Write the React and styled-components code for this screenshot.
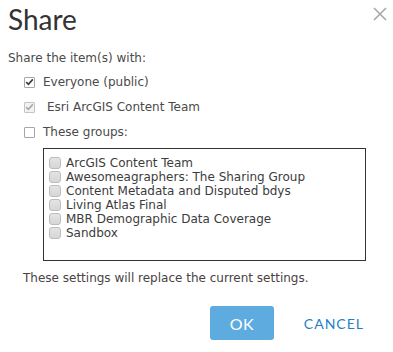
import { styled, createGlobalStyle } from "styled-components";

const groups = [
  "ArcGIS Content Team",
  "Awesomeagraphers: The Sharing Group",
  "Content Metadata and Disputed bdys",
  "Living Atlas Final",
  "MBR Demographic Data Coverage",
  "Sandbox",
];

const Tick = ({ color }) => (
  <svg width="9" height="8" viewBox="0 0 9 8">
    <path d="M1.2 4.2 L3.4 6.3 L7.8 1.4" fill="none" stroke={color} strokeWidth="1.6" />
  </svg>
);

const App = () => {
  return (
    <>
      <GlobalStyle />
      <Dialog>
        <Header>
          <Title>Share</Title>
          <Close aria-label="close">
            <svg width="14" height="14" viewBox="0 0 14 14">
              <path d="M1 1 L13 13 M13 1 L1 13" stroke="#a8a8a8" strokeWidth="1.6" />
            </svg>
          </Close>
        </Header>

        <Lead>Share the item(s) with:</Lead>

        <Options>
          <Option>
            <Box>
              <Tick color="#3c3c3c" />
            </Box>
            Everyone (public)
          </Option>
          <Option $dim>
            <Box $disabled>
              <Tick color="#a8a8a8" />
            </Box>
            Esri ArcGIS Content Team
          </Option>
          <Option>
            <Box />
            These groups:
          </Option>
        </Options>

        <GroupList>
          {groups.map((g) => (
            <GroupRow key={g}>
              <GroupBox />
              {g}
            </GroupRow>
          ))}
        </GroupList>

        <Note>These settings will replace the current settings.</Note>

        <Footer>
          <OkButton>OK</OkButton>
          <CancelButton>CANCEL</CancelButton>
        </Footer>
      </Dialog>
    </>
  );
};

export default App;

const GlobalStyle = createGlobalStyle`
  body {
    margin: 0;
    background: #ffffff;
    font-family: "DejaVu Sans", Verdana, sans-serif;
  }
`;

const Dialog = styled.div`
  width: 393px;
  height: 352px;
  box-sizing: border-box;
  padding: 0 5px 0 8px;
  color: #4a4a4a;
`;

const Header = styled.div`
  display: flex;
  justify-content: space-between;
  align-items: flex-start;
  height: 40px;
`;

const Title = styled.h1`
  margin: 0;
  padding-top: 2px;
  font-family: Lato, "Open Sans", sans-serif;
  font-weight: 400;
  font-size: 28px;
  line-height: 34px;
  color: #333333;
`;

const Close = styled.button`
  border: 0;
  background: none;
  padding: 0;
  margin-top: 7px;
  margin-right: 1px;
  width: 14px;
  height: 14px;
  cursor: pointer;
  display: flex;
`;

const Lead = styled.p`
  margin: 10px 0 0;
  font-size: 12px;
  line-height: 16px;
`;

const Options = styled.div`
  display: flex;
  flex-direction: column;
  gap: 9px;
  margin: 8px 0 0 16px;
`;

const Option = styled.label`
  display: flex;
  align-items: center;
  gap: 8px;
  font-size: 12px;
  line-height: 16px;
  height: 16px;
  color: #4a4a4a;
  ${(p) => p.$dim && "& > span { margin-right: 4px; }"}
`;

const Box = styled.span`
  width: 11px;
  height: 11px;
  box-sizing: border-box;
  border: 1px solid ${(p) => (p.$disabled ? "#c4c4c4" : "#a6a6a6")};
  background: ${(p) => (p.$disabled ? "#f2f2f2" : "#ffffff")};
  border-radius: 1px;
  display: flex;
  align-items: center;
  justify-content: center;
  flex: none;
`;

const GroupList = styled.div`
  margin: 8px 0 0 35px;
  width: 323px;
  height: 113px;
  box-sizing: border-box;
  border: 1px solid #333333;
  padding: 7px 0 0 5px;
`;

const GroupRow = styled.label`
  display: flex;
  align-items: center;
  gap: 5px;
  height: 14px;
  font-size: 12px;
  line-height: 14px;
  color: #3c3c3c;
`;

const GroupBox = styled.span`
  width: 12px;
  height: 12px;
  box-sizing: border-box;
  border: 1px solid #bcbcbc;
  border-radius: 3px;
  background: linear-gradient(#e4e4e4, #d6d6d6);
  flex: none;
`;

const Note = styled.p`
  margin: 9px 0 0 15px;
  font-size: 12px;
  line-height: 16px;
  color: #4a4242;
`;

const Footer = styled.div`
  display: flex;
  justify-content: flex-end;
  align-items: center;
  gap: 30px;
  margin-top: 20px;
  padding-right: 24px;
`;

const OkButton = styled.button`
  width: 64px;
  height: 34px;
  border: 0;
  border-radius: 3px;
  background: #5dabdf;
  color: #ffffff;
  font-family: Lato, "Open Sans", sans-serif;
  font-size: 16px;
  letter-spacing: 0.5px;
  cursor: pointer;
`;

const CancelButton = styled.button`
  border: 0;
  background: none;
  padding: 0;
  color: #1f7fc6;
  font-family: Lato, "Open Sans", sans-serif;
  font-size: 14px;
  letter-spacing: 1px;
  cursor: pointer;
`;
